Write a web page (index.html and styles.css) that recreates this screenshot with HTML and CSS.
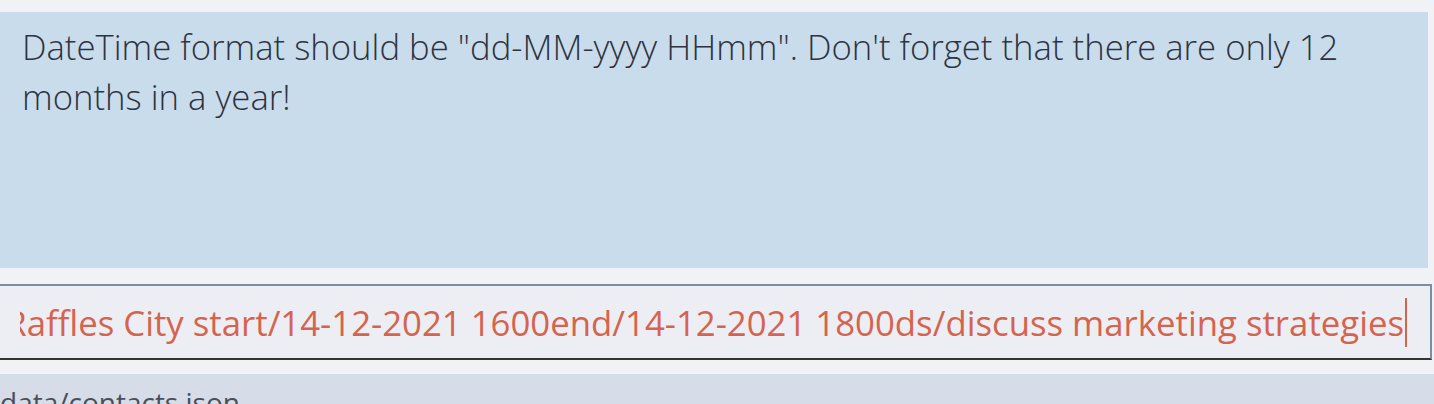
FILE: index.html
```html
<!DOCTYPE html>
<html>
<head>
<meta charset="utf-8">
<link rel="stylesheet" href="styles.css">
</head>
<body>
<div class="app">
  <div class="result-wrap">
    <div class="result">DateTime format should be "dd-MM-yyyy HHmm". Don't forget that there are only 12 months in a year!</div>
  </div>
  <div class="command-wrap">
    <div class="command">
      <div class="command-text"><span class="typed">add n/Project meeting v/Raffles City start/14-12-2021 1600end/14-12-2021 1800ds/discuss marketing strategies</span><span class="caret"></span></div>
    </div>
  </div>
  <div class="status">data/contacts.json</div>
</div>
</body>
</html>
```
FILE: styles.css
```css
html, body {
  margin: 0;
  padding: 0;
  background: #f1f2f6;
  width: 1434px;
  height: 404px;
  overflow: hidden;
}
.app {
  display: flex;
  flex-direction: column;
  font-family: "Open Sans", sans-serif;
}
.result-wrap {
  padding: 12px 6px 0 0;
}
.result {
  height: 256px;
  box-sizing: border-box;
  background: #c9dcec;
  color: #2e3340;
  font-size: 34.7px;
  font-weight: 300;
  line-height: 50px;
  padding: 10px 22px;
}
.command-wrap {
  padding: 16px 2px 0 0;
}
.command {
  height: 76px;
  box-sizing: border-box;
  background: #edeef4;
  border-top: 2px solid #7b8fa3;
  border-right: 2px solid #7b8fa3;
  border-bottom: 2px solid #333333;
  padding: 0 23px 0 20px;
  display: flex;
  align-items: center;
  overflow: hidden;
}
.command-text {
  flex: 1;
  display: flex;
  justify-content: flex-end;
  align-items: center;
  white-space: nowrap;
  overflow: hidden;
  color: #d5644e;
  font-size: 34.75px;
}
.typed {
  flex-shrink: 0;
}
.caret {
  flex-shrink: 0;
  width: 2px;
  height: 49px;
  background: #d5644e;
  margin-left: 1px;
}
.status {
  margin-top: 14px;
  height: 40px;
  background: #d7dde8;
  color: #4a4f5a;
  font-size: 28px;
  padding: 9px 0 0 0;
  box-sizing: border-box;
  white-space: nowrap;
}
```
